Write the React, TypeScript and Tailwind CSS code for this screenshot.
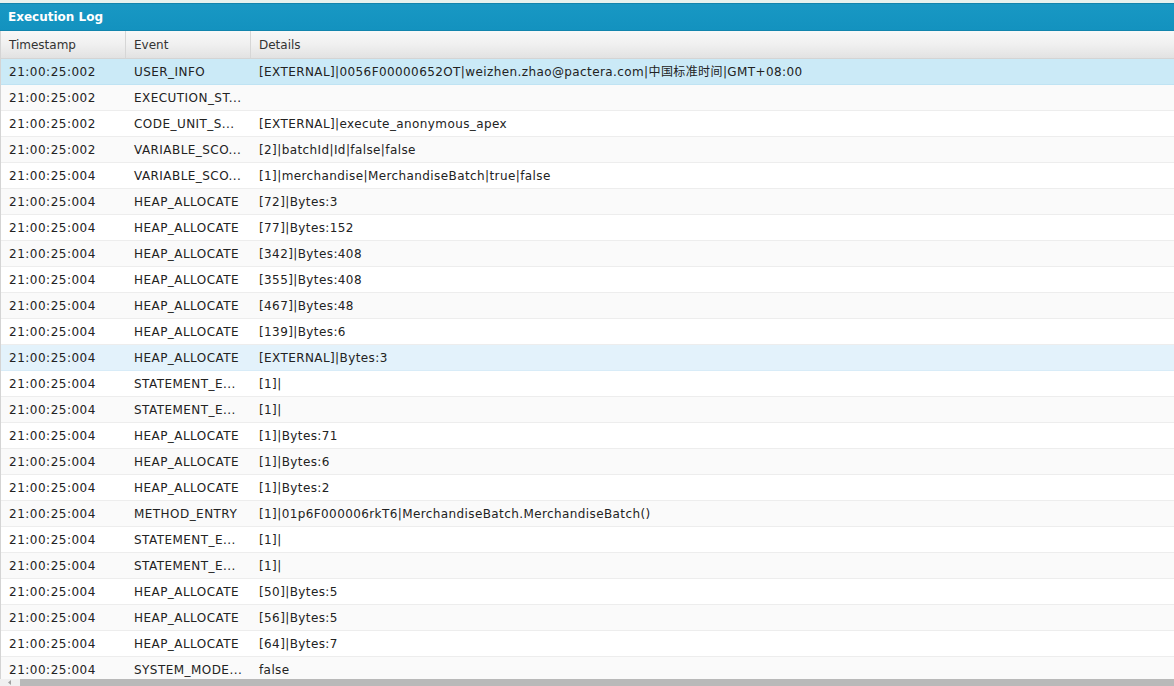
const rows: [string, string, string][] = [
  ["21:00:25:002", "USER_INFO", "[EXTERNAL]|0056F00000652OT|weizhen.zhao@pactera.com|中国标准时间|GMT+08:00"],
  ["21:00:25:002", "EXECUTION_ST...", ""],
  ["21:00:25:002", "CODE_UNIT_S...", "[EXTERNAL]|execute_anonymous_apex"],
  ["21:00:25:002", "VARIABLE_SCO...", "[2]|batchId|Id|false|false"],
  ["21:00:25:004", "VARIABLE_SCO...", "[1]|merchandise|MerchandiseBatch|true|false"],
  ["21:00:25:004", "HEAP_ALLOCATE", "[72]|Bytes:3"],
  ["21:00:25:004", "HEAP_ALLOCATE", "[77]|Bytes:152"],
  ["21:00:25:004", "HEAP_ALLOCATE", "[342]|Bytes:408"],
  ["21:00:25:004", "HEAP_ALLOCATE", "[355]|Bytes:408"],
  ["21:00:25:004", "HEAP_ALLOCATE", "[467]|Bytes:48"],
  ["21:00:25:004", "HEAP_ALLOCATE", "[139]|Bytes:6"],
  ["21:00:25:004", "HEAP_ALLOCATE", "[EXTERNAL]|Bytes:3"],
  ["21:00:25:004", "STATEMENT_E...", "[1]|"],
  ["21:00:25:004", "STATEMENT_E...", "[1]|"],
  ["21:00:25:004", "HEAP_ALLOCATE", "[1]|Bytes:71"],
  ["21:00:25:004", "HEAP_ALLOCATE", "[1]|Bytes:6"],
  ["21:00:25:004", "HEAP_ALLOCATE", "[1]|Bytes:2"],
  ["21:00:25:004", "METHOD_ENTRY", "[1]|01p6F000006rkT6|MerchandiseBatch.MerchandiseBatch()"],
  ["21:00:25:004", "STATEMENT_E...", "[1]|"],
  ["21:00:25:004", "STATEMENT_E...", "[1]|"],
  ["21:00:25:004", "HEAP_ALLOCATE", "[50]|Bytes:5"],
  ["21:00:25:004", "HEAP_ALLOCATE", "[56]|Bytes:5"],
  ["21:00:25:004", "HEAP_ALLOCATE", "[64]|Bytes:7"],
  ["21:00:25:004", "SYSTEM_MODE...", "false"],
];

// selected row 0, hovered row 11
function rowBg(i: number) {
  if (i === 0) return "bg-[#cbeaf7] border-[#bfe3f3]";
  if (i === 11) return "bg-[#e3f2fb] border-[#d8ecf8]";
  return i % 2 === 1 ? "bg-[#fafafa] border-[#ededed]" : "bg-white border-[#ededed]";
}

export default function App() {
  return (
    <div
      className="flex h-[686px] w-[1174px] flex-col overflow-hidden bg-white text-[12px] text-[#222]"
      style={{ fontFamily: '"DejaVu Sans", Verdana, "Noto Sans CJK SC", sans-serif' }}
    >
      <div className="h-[3px] shrink-0 bg-[#e6f2ee]" />
      <div className="flex h-[28px] shrink-0 items-center border-y border-[#1285ad] bg-gradient-to-b from-[#1898c4] to-[#1392bf] px-2 font-bold text-white">
        Execution Log
      </div>
      <div className="flex h-[28px] shrink-0 border-b border-l border-[#d4d4d4] bg-gradient-to-b from-[#f8f8f8] via-[#f0f0f0] to-[#e2e2e2] text-[#333]">
        <div className="flex w-[125px] items-center border-r border-[#d6d6d6] px-2">Timestamp</div>
        <div className="flex w-[125px] items-center border-r border-[#d6d6d6] px-2">Event</div>
        <div className="flex flex-1 items-center px-2">Details</div>
      </div>
      <div className="min-h-0 flex-1 overflow-hidden border-l border-[#d4d4d4]">
        {rows.map(([ts, ev, det], i) => (
          <div key={i} className={`flex h-[26px] items-center border-b pt-px ${rowBg(i)}`}>
            <div className="w-[125px] shrink-0 px-2 tracking-[0.5px]">{ts}</div>
            <div className="w-[125px] shrink-0 truncate px-2 tracking-[0.45px]">{ev}</div>
            <div className="flex-1 truncate px-2 tracking-[0.4px]">{det}</div>
          </div>
        ))}
      </div>
      <div className="flex h-[7px] shrink-0">
        <div className="flex w-[20px] items-center justify-center bg-[#f0f0f0]">
          <svg width="4" height="5" viewBox="0 0 4 5">
            <path d="M3 0 L0 2.5 L3 5 Z" fill="#a0a0a0" />
          </svg>
        </div>
        <div className="flex-1 bg-[#b9b9b9]" />
      </div>
    </div>
  );
}
